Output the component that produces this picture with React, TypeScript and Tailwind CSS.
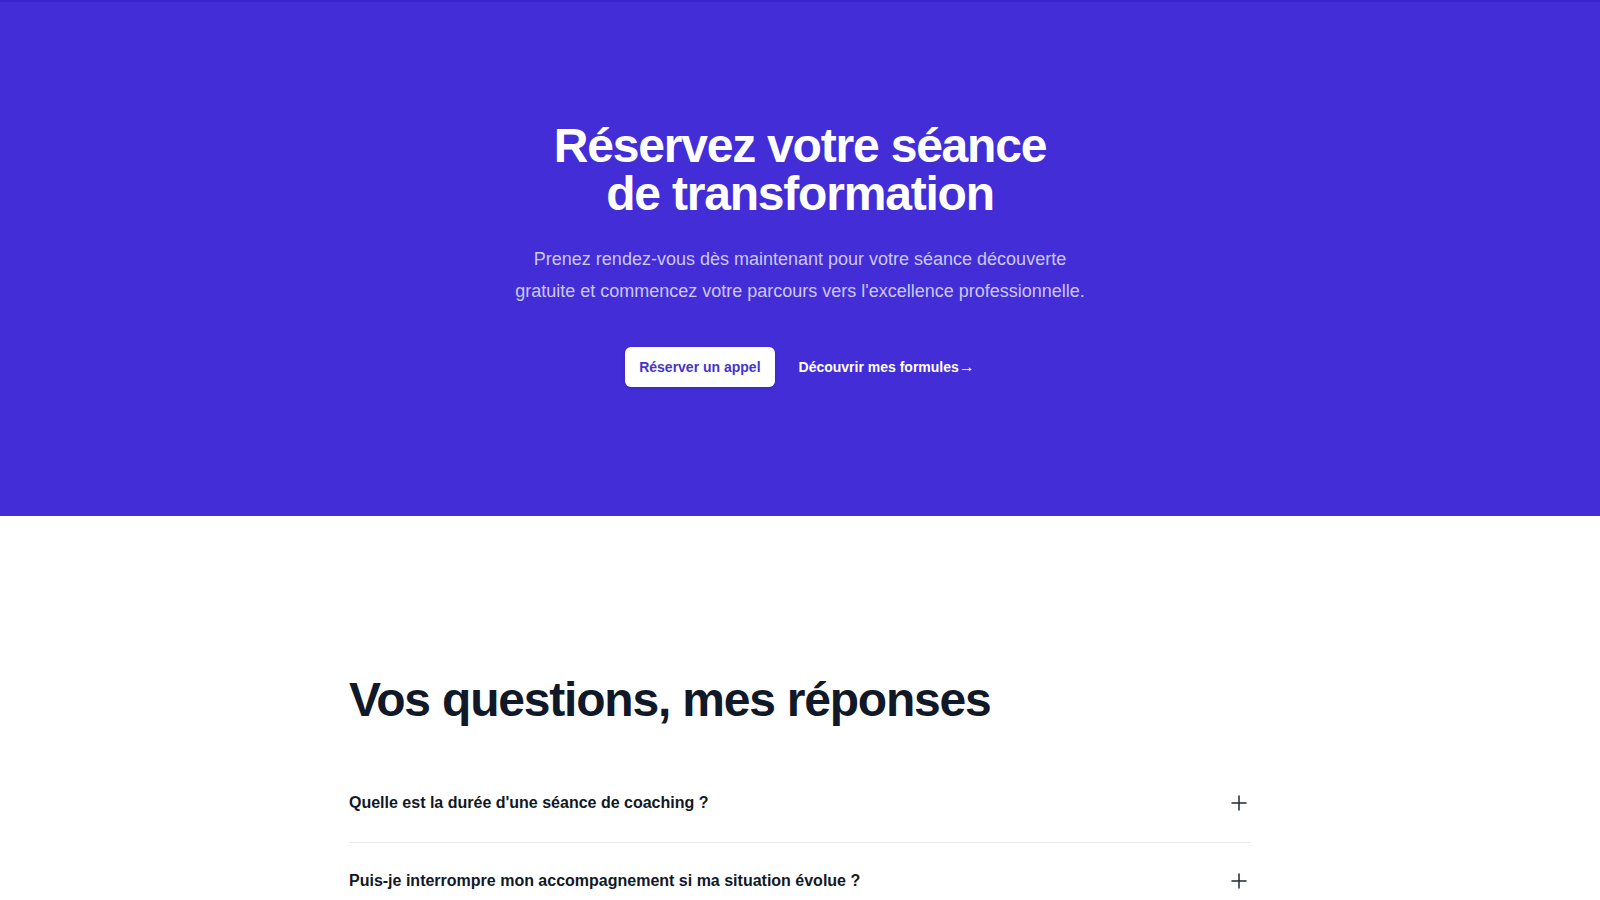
import React from "react";

const faqs = [
  "Quelle est la durée d'une séance de coaching ?",
  "Puis-je interrompre mon accompagnement si ma situation évolue ?",
  "Les séances se déroulent-elles en ligne ou en présentiel ?",
  "Comment se déroule la séance découverte gratuite ?",
];

function PlusIcon() {
  return (
    <svg
      width="24"
      height="24"
      viewBox="0 0 24 24"
      fill="none"
      stroke="currentColor"
      strokeWidth="1.5"
      strokeLinecap="round"
      strokeLinejoin="round"
      aria-hidden="true"
    >
      <path d="M5 12h14" />
      <path d="M12 5v14" />
    </svg>
  );
}

export default function App() {
  return (
    <div className="min-h-screen bg-white" style={{ fontFamily: '"Liberation Sans", Arial, sans-serif' }}>
      <section className="bg-[#422dd7] border-t-2 border-[#3a25cb] pt-[120px] pb-[129px] px-6">
        <div className="mx-auto max-w-2xl text-center">
          <h2 className="text-5xl leading-none font-bold tracking-tight text-white">
            Réservez votre séance
            <br />
            de transformation
          </h2>
          <p className="mx-auto mt-[25px] max-w-[580px] text-lg leading-8 text-[#cdc8f5]">
            Prenez rendez-vous dès maintenant pour votre séance découverte gratuite et commencez votre parcours vers l'excellence professionnelle.
          </p>
          <div className="mt-10 flex items-center justify-center gap-x-6">
            <a
              href="#"
              className="rounded-md bg-white px-3.5 py-2.5 text-sm leading-5 font-bold text-[#4534cc] shadow-sm"
            >
              Réserver un appel
            </a>
            <a href="#" className="text-sm leading-6 font-bold text-white">
              Découvrir mes formules<span aria-hidden="true" className="text-base font-normal">→</span>
            </a>
          </div>
        </div>
      </section>

      <section className="pt-[160px] pb-32 px-6">
        <div className="mx-auto max-w-[902px]">
          <h2 className="text-5xl leading-none font-bold tracking-tight text-[#111827]">
            Vos questions, mes réponses
          </h2>
          <dl className="mt-[65px] divide-y divide-[#e8e8ea]">
            {faqs.map((q, i) => (
              <div key={i} className={i === 0 ? "pb-[25px]" : "pt-6 pb-[25px]"}>
                <dt>
                  <button type="button" className="flex w-full items-start justify-between text-left text-[#111827]">
                    <span className="text-base leading-7 font-bold">{q}</span>
                    <span className="ml-6 flex h-7 items-center text-[#1f2937]">
                      <PlusIcon />
                    </span>
                  </button>
                </dt>
              </div>
            ))}
          </dl>
        </div>
      </section>
    </div>
  );
}
